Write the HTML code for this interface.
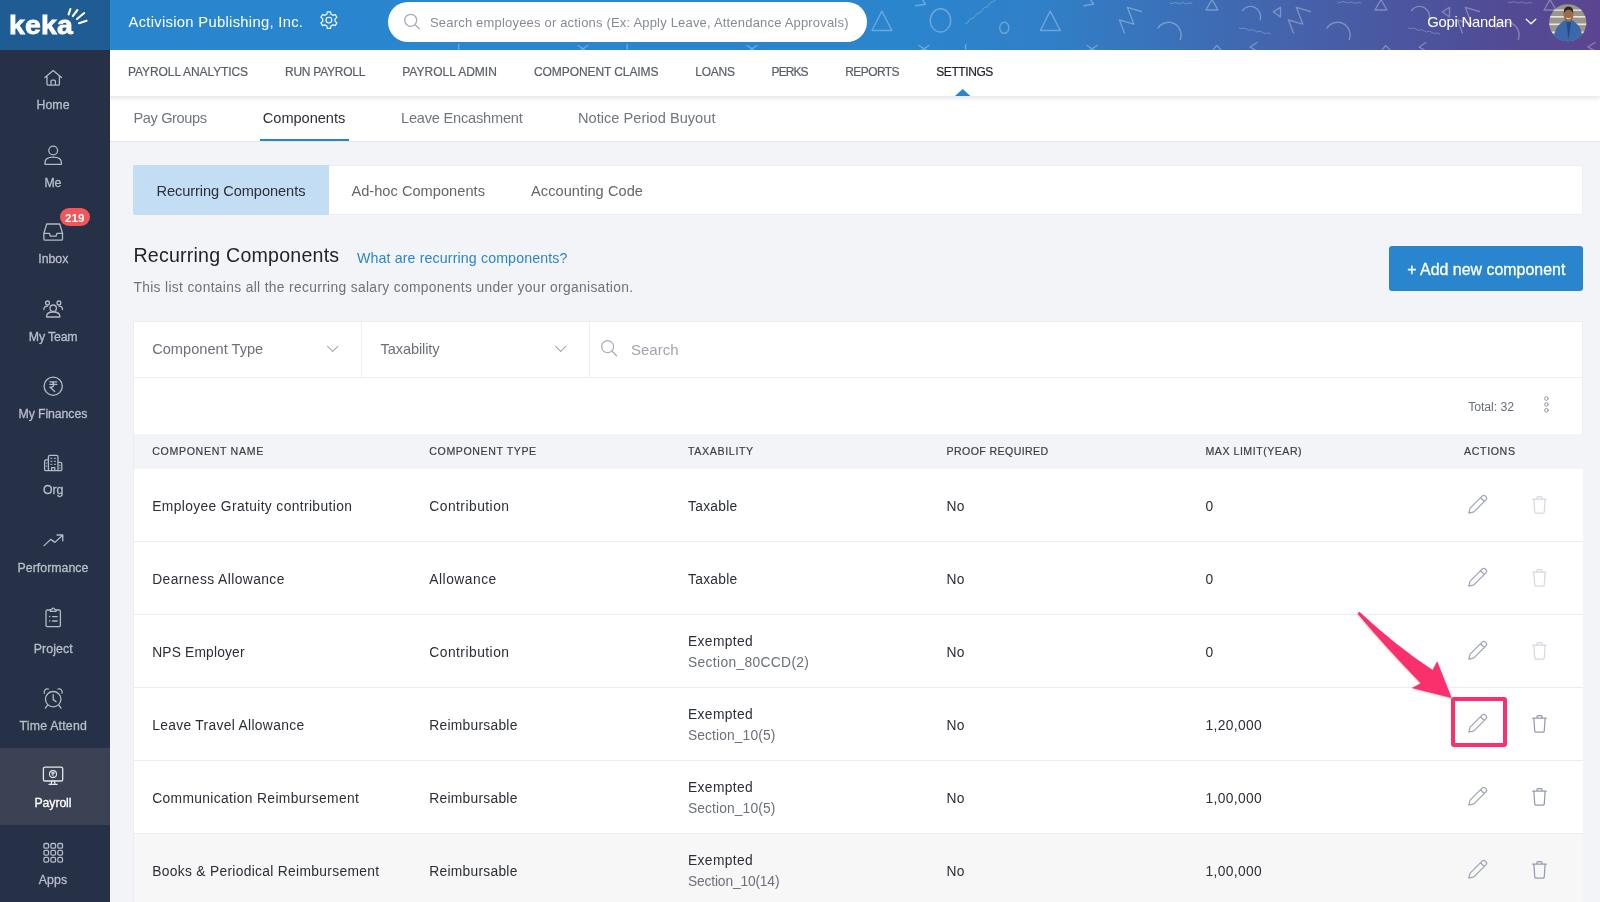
<!DOCTYPE html>
<html lang="en">
<head>
<meta charset="utf-8">
<title>Keka - Payroll Components</title>
<style>
*{box-sizing:border-box;margin:0;padding:0}
html,body{width:1600px;height:902px;overflow:hidden;background:#f3f4f8;font-family:"Liberation Sans",sans-serif;color:#2b2f36}
body{position:relative;will-change:transform}
.t{position:absolute;white-space:nowrap;line-height:1}
.a{position:absolute}
svg{position:absolute;overflow:visible}
#side{position:absolute;left:0;top:0;width:110px;height:902px;background:#263147}
#logo{position:absolute;left:0;top:0;width:110px;height:50px;background:#1f5c93}
#side .t{-webkit-text-stroke:.3px currentColor}
#side svg{fill:none;stroke:#b4bac6;stroke-width:1.3;stroke-linecap:round;stroke-linejoin:round}
#top{position:absolute;left:110px;top:0;width:1490px;height:50px;background:linear-gradient(90deg,#2986ce 0%,#2a85cd 53%,#3080c8 62.4%,#3b70b8 71.8%,#4562aa 79.9%,#4b56a0 86.6%,#514b95 93.3%,#5b4590 100%);overflow:hidden}
#nav{position:absolute;left:0;top:50px;width:1600px;height:46px;background:#fff;box-shadow:0 2px 5px rgba(30,40,70,.13)}
#sub{position:absolute;left:0;top:95px;width:1600px;height:47px;background:#fff;border-bottom:1px solid #e4e7ed}
.card{position:absolute;background:#fff;border:1px solid #ecedf1}
.row{position:absolute;left:134px;width:1449px;height:73px;border-bottom:1px solid #ececef;background:#fff}
</style>
</head>
<body>

<div id="sub"></div>
<div id="nav"></div>
<div class="t" style="left:133.4px;top:111.0px;font-size:14.6px;color:#70757e;letter-spacing:-0.366px;">Pay Groups</div>
<div class="t" style="left:262.8px;top:111.0px;font-size:14.6px;color:#2b2f36;letter-spacing:-0.031px;">Components</div>
<div class="t" style="left:401.0px;top:111.0px;font-size:14.6px;color:#70757e;letter-spacing:-0.213px;">Leave Encashment</div>
<div class="t" style="left:578.0px;top:111.0px;font-size:14.6px;color:#70757e;letter-spacing:0.018px;">Notice Period Buyout</div>
<div class="a" style="left:260px;top:139px;width:89px;height:2px;background:#2986ce"></div>
<div class="t" style="left:128.1px;top:65.9px;font-size:12px;color:#5a5f67;letter-spacing:-0.100px;-webkit-text-stroke:.2px currentColor;">PAYROLL ANALYTICS</div>
<div class="t" style="left:285.0px;top:65.9px;font-size:12px;color:#5a5f67;letter-spacing:-0.261px;-webkit-text-stroke:.2px currentColor;">RUN PAYROLL</div>
<div class="t" style="left:402.2px;top:65.9px;font-size:12px;color:#5a5f67;letter-spacing:0.019px;-webkit-text-stroke:.2px currentColor;">PAYROLL ADMIN</div>
<div class="t" style="left:534.0px;top:65.9px;font-size:12px;color:#5a5f67;letter-spacing:-0.086px;-webkit-text-stroke:.2px currentColor;">COMPONENT CLAIMS</div>
<div class="t" style="left:695.3px;top:65.9px;font-size:12px;color:#5a5f67;letter-spacing:-0.245px;-webkit-text-stroke:.2px currentColor;">LOANS</div>
<div class="t" style="left:771.6px;top:65.9px;font-size:12px;color:#5a5f67;letter-spacing:-0.921px;-webkit-text-stroke:.2px currentColor;">PERKS</div>
<div class="t" style="left:845.3px;top:65.9px;font-size:12px;color:#5a5f67;letter-spacing:-0.599px;-webkit-text-stroke:.2px currentColor;">REPORTS</div>
<div class="t" style="left:936.3px;top:65.9px;font-size:12px;color:#22262c;letter-spacing:-0.429px;-webkit-text-stroke:.2px currentColor;">SETTINGS</div>
<svg style="left:955px;top:89.2px" width="15.4" height="7"><path d="M0 7 L7.7 0 L15.4 7Z" fill="#2986ce"/></svg>
<div id="top">
<svg id="pat" style="left:-110px;top:0" width="1600" height="50" fill="none" stroke="#fff" stroke-linecap="round" stroke-linejoin="round">
<g stroke-opacity=".3" stroke-width="1.4"><path d="M1206 10 L1212 -0.5 L1218 10Z M1242.5 10.5 A10 10 0 0 1 1260 19.7 M1280.5 7.3 L1273.2 11.8 L1280.5 17Z M1310.4 11.5 L1296.3 7.3 L1302.8 24.1 L1288.4 20 L1293.4 32.8 M1327 28 A12.6 12.6 0 0 1 1349.3 39.4 M1213 50 L1216.7 45.5 L1221 50 M1257 42.5 L1250 47 L1257 51 M1375 10 L1381 -0.5 L1387 10Z M1411.5 10.5 A10 10 0 0 1 1429 19.7 M1449.5 7.3 L1442.2 11.8 L1449.5 17Z M1479.4 11.5 L1465.3 7.3 L1471.8 24.1 L1457.4 20 L1462.4 32.8 M1496 28 A12.6 12.6 0 0 1 1518.3 39.4 M1382 50 L1385.7 45.5 L1390 50 M1426 42.5 L1419 47 L1426 51 M1544 10 L1550 -0.5 L1556 10Z M1595 42.5 L1588 47 L1595 51 M1141.4 11.5 L1127.3 7.3 L1133.8 24.1 L1119.4 20 L1124.4 32.8 M1158 28 A12.6 12.6 0 0 1 1180.3 39.4"/><path d="M872 30.5 L881.8 11.1 L891.9 30.5Z M1040.4 30.5 L1050.2 11.1 L1060.3 30.5Z M915.5 5.8 L925.4 4.2 L922 -1 M1083.9 5.8 L1093.6 4 L1090 -1 M919 45.5 L929 52 M929 45.5 L919 52 M1087 45.5 L1097 52 M1097 45.5 L1087 52 M578 45.5 L588 52 M588 45.5 L578 52 M747 45.5 L757 52 M757 45.5 L747 52 M459 44.5 Q458 47 459 51 M627.5 44.5 Q626.5 47 627.5 51 M966 44.5 Q965 47 966 51"/><ellipse cx="940.5" cy="20.4" rx="10.2" ry="11.6"/><ellipse cx="1004.3" cy="27.8" rx="4.6" ry="5.5"/></g>
<g stroke-opacity=".28" stroke-width=".9"><path d="M965.2 24.0 Q967.7 23.6 968.6 21.2 Q969.5 18.8 972.0 18.4 Q974.6 18.1 975.5 15.7 Q976.4 13.3 978.9 12.9 Q981.4 12.5 982.3 10.1 Q983.2 7.7 985.7 7.3 Q988.3 7.0 989.2 4.6 Q990.0 2.2 992.6 1.8 Q995.1 1.4 996.0 -1.0 M1239.0 27.6 Q1240.7 29.3 1242.9 28.4 Q1245.2 27.5 1246.9 29.2 Q1248.6 30.9 1250.8 30.0 Q1253.0 29.1 1254.8 30.8 Q1256.5 32.5 1258.7 31.6 Q1260.9 30.7 1262.6 32.4 Q1264.3 34.1 1266.6 33.2 Q1268.8 32.3 1270.5 34.0 M1408.0 27.6 Q1409.7 29.3 1412.0 28.4 Q1414.2 27.5 1416.0 29.2 Q1417.7 30.9 1419.9 30.0 Q1422.2 29.1 1423.9 30.8 Q1425.6 32.5 1427.9 31.6 Q1430.1 30.7 1431.8 32.4 Q1433.6 34.1 1435.8 33.2 Q1438.1 32.3 1439.8 34.0 M1170.0 3.0 Q1171.8 4.3 1173.7 3.1 Q1175.5 1.8 1177.3 3.2 Q1179.1 4.5 1181.0 3.2 Q1182.9 2.0 1184.7 3.3 Q1186.5 4.7 1188.3 3.4 Q1190.2 2.2 1192.0 3.5 M1337.5 2.0 Q1339.4 3.4 1341.4 2.2 Q1343.4 1.0 1345.3 2.3 Q1347.2 3.7 1349.2 2.5 Q1351.3 1.3 1353.2 2.7 Q1355.1 4.0 1357.1 2.8 Q1359.1 1.6 1361.0 3.0 M1508.0 2.0 Q1509.9 3.4 1512.0 2.2 Q1514.0 1.0 1515.9 2.3 Q1517.8 3.7 1519.8 2.5 Q1521.9 1.3 1523.8 2.7 Q1525.7 4.0 1527.8 2.8 Q1529.8 1.6 1531.7 3.0"/></g>
</svg>
</div>
<div class="t" style="left:128.5px;top:14.5px;font-size:14.8px;color:#fff;letter-spacing:0.289px;">Activision Publishing, Inc.</div>
<div class="a" style="left:388px;top:2px;width:479px;height:40px;border-radius:20px;background:#fff"></div>
<div class="t" style="left:430.0px;top:15.9px;font-size:13px;color:#858b96;letter-spacing:0.187px;">Search employees or actions (Ex: Apply Leave, Attendance Approvals)</div>
<div class="t" style="left:1427.2px;top:14.8px;font-size:14.8px;color:#fff;letter-spacing:-0.212px;">Gopi Nandan</div>
<svg style="left:0;top:0" width="400" height="50" fill="none" stroke="#fff" stroke-width="1.15" stroke-linejoin="round"><path d="M330.95 14.14 L330.51 11.81 L327.29 11.81 L326.85 14.14 L324.77 15.35 L322.52 14.56 L320.91 17.35 L322.72 18.90 L322.72 21.30 L320.91 22.85 L322.52 25.64 L324.77 24.85 L326.85 26.06 L327.29 28.39 L330.51 28.39 L330.95 26.06 L333.03 24.85 L335.28 25.64 L336.89 22.85 L335.08 21.30 L335.08 18.90 L336.89 17.35 L335.28 14.56 L333.03 15.35Z"/><circle cx="328.9" cy="20.1" r="2.9"/></svg>
<svg style="left:400px;top:10px" width="24" height="24" fill="none" stroke="#a9aebb" stroke-width="1.3" stroke-linecap="round"><circle cx="10.7" cy="10.3" r="6"/><path d="M15 14.8 L19.3 18.8"/></svg>
<svg style="left:1520px;top:14px" width="20" height="14" fill="none" stroke="#fff" stroke-width="1.25" stroke-linecap="round" stroke-linejoin="round"><path d="M6.2 5.2 L11 9.8 L15.8 5.2"/></svg>
<svg style="left:1549px;top:3.5px" width="37.5" height="37.5" viewBox="0 0 37.5 37.5"><defs><clipPath id="av"><circle cx="18.75" cy="18.75" r="18.6"/></clipPath></defs><g clip-path="url(#av)"><rect width="38" height="38" fill="#9c968a"/><rect y="5.5" width="38" height="1.4" fill="#e4e1da"/><rect y="12" width="38" height="1.6" fill="#ebe8e2"/><rect y="19.5" width="38" height="1.6" fill="#ebe8e2"/><rect y="27.5" width="38" height="1.8" fill="#ebe8e2"/><path d="M4 38 Q5 24 12 19 L16 16 H23 L27 19 Q33 23 34 38Z" fill="#3b68a8"/><path d="M17.5 18 L19.5 36 L22 18Z" fill="#244a86"/><ellipse cx="19.5" cy="11.3" rx="4.9" ry="6.3" fill="#9c6a4b"/><path d="M14.6 9.5 Q14.5 2.5 19.5 2.6 Q24.5 2.5 24.4 9.5 Q22 5.5 19.5 5.8 Q17 5.5 14.6 9.5Z" fill="#2d2622"/><path d="M17.3 14 Q19.5 15.8 21.7 14" stroke="#f1e6dc" stroke-width="1" fill="none"/></g></svg>
<div id="side"><div id="logo"></div>
<div class="a" style="left:0;top:748px;width:110px;height:77px;background:#3a4254"></div>
<div class="t" style="left:36.6px;top:99.3px;font-size:12.3px;color:#b9bec9;letter-spacing:0.030px;">Home</div>
<div class="t" style="left:44.6px;top:176.5px;font-size:12.3px;color:#b9bec9;letter-spacing:-0.400px;">Me</div>
<div class="t" style="left:38.3px;top:253.4px;font-size:12.3px;color:#b9bec9;letter-spacing:-0.022px;">Inbox</div>
<div class="t" style="left:28.8px;top:330.7px;font-size:12.3px;color:#b9bec9;letter-spacing:-0.145px;">My Team</div>
<div class="t" style="left:18.5px;top:407.8px;font-size:12.3px;color:#b9bec9;letter-spacing:-0.092px;">My Finances</div>
<div class="t" style="left:42.9px;top:483.5px;font-size:12.3px;color:#b9bec9;">Org</div>
<div class="t" style="left:17.6px;top:561.9px;font-size:12.3px;color:#b9bec9;letter-spacing:0.029px;">Performance</div>
<div class="t" style="left:33.7px;top:642.7px;font-size:12.3px;color:#b9bec9;letter-spacing:0.120px;">Project</div>
<div class="t" style="left:19.5px;top:719.7px;font-size:12.3px;color:#b9bec9;letter-spacing:0.212px;">Time Attend</div>
<div class="t" style="left:34.5px;top:797.4px;font-size:12.3px;color:#fff;letter-spacing:-0.100px;">Payroll</div>
<div class="t" style="left:38.8px;top:874.3px;font-size:12.3px;color:#b9bec9;letter-spacing:0.121px;">Apps</div>
<div class="t" style="left:9.2px;top:12.9px;font-size:25.4px;font-weight:700;color:#fff;letter-spacing:.2px;transform:scaleX(1.12);transform-origin:0 0;-webkit-text-stroke:.8px #fff">keka</div>
<svg style="left:0;top:0;stroke:#fff;stroke-width:2.1" width="110" height="50"><path d="M70.4 9 L68.6 14.4 M77.4 10 L72.8 16.2 M84.2 13 L77 19 M86.6 20.8 L79 23.2"/></svg>
<svg style="left:0;top:0" width="110" height="902">
<path d="M44.9 77.6 L53.2 70.6 L61.5 77.6 M47 76.2 V84 a1.2 1.2 0 0 0 1.2 1.2 H58.2 a1.2 1.2 0 0 0 1.2 -1.2 V76.2 M51 85 V81.2 a1 1 0 0 1 1 -1 h2.4 a1 1 0 0 1 1 1 V85"/>
<circle cx="53.2" cy="150.5" r="4.4"/><path d="M45 164.3 v-1.6 q0 -5.6 8.2 -5.6 q8.2 0 8.2 5.6 v1.6 z"/>
<path d="M43.9 233.3 L46.7 224 H59.7 L62.5 233.3 V239 a1.2 1.2 0 0 1 -1.2 1.2 H45.1 a1.2 1.2 0 0 1 -1.2 -1.2 Z M43.9 233.3 H49.4 L50.4 236.2 H56 L57 233.3 H62.5"/>
<circle cx="53.2" cy="308.2" r="3.2"/><path d="M46.6 317 v-.8 q0 -4.2 6.6 -4.2 q6.6 0 6.6 4.2 v.8 z"/><circle cx="47.5" cy="302.9" r="1.9"/><circle cx="58.9" cy="302.9" r="1.9"/><path d="M43.9 309.6 q0 -3.4 3.6 -3.4 M62.5 309.6 q0 -3.4 -3.6 -3.4"/>
<circle cx="53.2" cy="386.2" r="9.1"/><path d="M49.9 381.8 H56.8 M49.9 384.4 H56.8 M51.6 381.8 a2.7 2.7 0 0 1 0 5.3 H49.9 L54.7 391.5"/>
<path d="M48.4 470.6 V457 a1.6 1.6 0 0 1 1.6 -1.6 H56.4 a1.6 1.6 0 0 1 1.6 1.6 V470.6 M48.4 459.8 H46 a1.4 1.4 0 0 0 -1.4 1.4 V469.4 a1.2 1.2 0 0 0 1.2 1.2 H60.6 a1.2 1.2 0 0 0 1.2 -1.2 V463.8 a1.4 1.4 0 0 0 -1.4 -1.4 H58 M51.6 470.6 V467.6 h3.2 V470.6"/><path stroke-width="1.1" d="M50.8 458.2 h1.2 M54.4 458.2 h1.2 M50.8 461.2 h1.2 M54.4 461.2 h1.2 M50.8 464.2 h1.2 M54.4 464.2 h1.2 M46.2 463 h.6 M46.2 466 h.6 M59.6 465.2 h.6 M59.6 468 h.6"/>
<path d="M44.1 545.6 L50.7 539.4 L54.9 542.4 L62.6 535.2 M57 535 H62.8 V540.8"/>
<path d="M50.4 610 H47.4 a1.4 1.4 0 0 0 -1.4 1.4 V625.2 a1.4 1.4 0 0 0 1.4 1.4 H59 a1.4 1.4 0 0 0 1.4 -1.4 V611.4 a1.4 1.4 0 0 0 -1.4 -1.4 H56 M50.4 611.4 V609.6 h1.4 a1.4 1.4 0 0 1 2.8 0 h1.4 V611.4 Z M52.6 616.6 H57.2 M52.6 621 H57.2"/><path stroke-width="1.5" d="M49.6 616.6 h.1 M49.6 621 h.1"/>
<circle cx="53.2" cy="699.2" r="7.7"/><path d="M53.2 694.6 V699.6 L56 701.6 M44.4 693.2 a3.2 3.2 0 0 1 4 -4.2 M62 693.2 a3.2 3.2 0 0 0 -4 -4.2 M47.6 705.2 L45.4 708 M58.8 705.2 L61 708"/>
<g stroke="#e6e8ed"><rect x="43.4" y="767.2" width="19.3" height="13.8" rx="1.6"/><path d="M51.8 781 L51.2 784.2 M54.4 781 L55 784.2 M49 784.3 H57.2"/><circle cx="53" cy="774.1" r="3.5" stroke-width="1.1"/><path stroke-width=".8" d="M51.8 772.4 H54.3 M51.8 773.5 H54.3 M52.4 772.4 a1.1 1.1 0 0 1 0 2.2 H51.8 L53.8 776.2"/></g>
<rect x="43.90" y="843.50" width="4.7" height="4.7" rx="1.3"/>
<rect x="50.85" y="843.50" width="4.7" height="4.7" rx="1.3"/>
<rect x="57.80" y="843.50" width="4.7" height="4.7" rx="1.3"/>
<rect x="43.90" y="850.45" width="4.7" height="4.7" rx="1.3"/>
<rect x="50.85" y="850.45" width="4.7" height="4.7" rx="1.3"/>
<rect x="57.80" y="850.45" width="4.7" height="4.7" rx="1.3"/>
<rect x="43.90" y="857.40" width="4.7" height="4.7" rx="1.3"/>
<rect x="50.85" y="857.40" width="4.7" height="4.7" rx="1.3"/>
<rect x="57.80" y="857.40" width="4.7" height="4.7" rx="1.3"/>
</svg>
<div class="a" style="left:60px;top:208.2px;width:30.2px;height:17.6px;border-radius:9px;background:#f2565b"></div>
<div class="t" style="left:65.0px;top:211.5px;font-size:11.6px;color:#fff;letter-spacing:0.023px;font-weight:700;-webkit-text-stroke:0;">219</div>
</div>
<div class="card" style="left:133px;top:165px;width:1450px;height:50px;border-color:#eceef3;border-radius:2px"></div>
<div class="a" style="left:133px;top:165px;width:196px;height:50px;background:#c3ddf4;border-radius:2px 0 0 2px"></div>
<div class="t" style="left:156.4px;top:183.7px;font-size:14.6px;color:#2b2f36;letter-spacing:-0.054px;">Recurring Components</div>
<div class="t" style="left:351.4px;top:183.7px;font-size:14.6px;color:#63666c;letter-spacing:0.031px;">Ad-hoc Components</div>
<div class="t" style="left:531.0px;top:183.7px;font-size:14.6px;color:#63666c;letter-spacing:0.057px;">Accounting Code</div>
<div class="t" style="left:133.4px;top:246.4px;font-size:19.6px;color:#222427;letter-spacing:0.224px;">Recurring Components</div>
<div class="t" style="left:357.0px;top:250.7px;font-size:14.2px;color:#2986ce;letter-spacing:0.131px;">What are recurring components?</div>
<div class="t" style="left:133.4px;top:280.9px;font-size:13.8px;color:#6f7277;letter-spacing:0.340px;">This list contains all the recurring salary components under your organisation.</div>
<div class="a" style="left:1389px;top:246px;width:194px;height:45px;border-radius:3px;background:#2986ce"></div>
<div class="t" style="left:1407.2px;top:261.6px;font-size:15.9px;color:#fff;letter-spacing:0.023px;-webkit-text-stroke:.3px #fff;">+ Add new component</div>
<div class="card" style="left:133px;top:321px;width:1450px;height:600px"></div>
<div class="a" style="left:134px;top:377px;width:1448px;height:1px;background:#eceef2"></div>
<div class="a" style="left:361px;top:322px;width:1px;height:55px;background:#eceef2"></div>
<div class="a" style="left:589px;top:322px;width:1px;height:55px;background:#eceef2"></div>
<div class="t" style="left:152.2px;top:342.1px;font-size:14.6px;color:#6b7079;letter-spacing:0.013px;">Component Type</div>
<div class="t" style="left:380.5px;top:342.1px;font-size:14.6px;color:#6b7079;letter-spacing:-0.105px;">Taxability</div>
<div class="t" style="left:630.9px;top:342.3px;font-size:15px;color:#a0a5ae;letter-spacing:0.055px;">Search</div>
<svg style="left:0;top:0" width="1600" height="420" fill="none" stroke="#a0a6b2" stroke-width="1.1" stroke-linecap="round" stroke-linejoin="round"><path d="M327.6 346.4 L332.7 351.3 L337.8 346.4 M555.6 346.4 L560.7 351.3 L565.8 346.4"/><g stroke="#a9aebb" stroke-width="1.3"><circle cx="607.6" cy="346.6" r="6"/><path d="M612 351.3 L616.6 355.8"/></g><g stroke="#8f95a2" stroke-width="1"><circle cx="1546.4" cy="398.5" r="1.8"/><circle cx="1546.4" cy="404.4" r="1.8"/><circle cx="1546.4" cy="410.3" r="1.8"/></g></svg>
<div class="t" style="left:1468.2px;top:400.7px;font-size:12.3px;color:#6b7079;letter-spacing:-0.087px;">Total: 32</div>
<div class="a" style="left:134px;top:434px;width:1449px;height:35px;background:#f3f4f8"></div>
<div class="t" style="left:152.2px;top:446.4px;font-size:10.6px;color:#3a3f47;letter-spacing:0.679px;-webkit-text-stroke:.2px currentColor;">COMPONENT NAME</div>
<div class="t" style="left:429.3px;top:446.4px;font-size:10.6px;color:#3a3f47;letter-spacing:0.596px;-webkit-text-stroke:.2px currentColor;">COMPONENT TYPE</div>
<div class="t" style="left:688.0px;top:446.4px;font-size:10.6px;color:#3a3f47;letter-spacing:0.656px;-webkit-text-stroke:.2px currentColor;">TAXABILITY</div>
<div class="t" style="left:946.5px;top:446.4px;font-size:10.6px;color:#3a3f47;letter-spacing:0.401px;-webkit-text-stroke:.2px currentColor;">PROOF REQUIRED</div>
<div class="t" style="left:1205.5px;top:446.4px;font-size:10.6px;color:#3a3f47;letter-spacing:0.519px;-webkit-text-stroke:.2px currentColor;">MAX LIMIT(YEAR)</div>
<div class="t" style="left:1464.0px;top:446.4px;font-size:10.6px;color:#3a3f47;letter-spacing:0.647px;-webkit-text-stroke:.2px currentColor;">ACTIONS</div>
<div class="row" style="top:469px;background:#fff"></div>
<div class="t" style="left:152.2px;top:499.5px;font-size:13.8px;color:#2b2f36;letter-spacing:0.380px;">Employee Gratuity contribution</div>
<div class="t" style="left:429.3px;top:499.5px;font-size:13.8px;color:#2b2f36;letter-spacing:0.481px;">Contribution</div>
<div class="t" style="left:688.0px;top:499.5px;font-size:13.8px;color:#2b2f36;letter-spacing:0.289px;">Taxable</div>
<div class="t" style="left:946.5px;top:499.5px;font-size:13.8px;color:#2b2f36;letter-spacing:0.400px;">No</div>
<div class="t" style="left:1205.5px;top:499.5px;font-size:13.8px;color:#2b2f36;">0</div>
<svg class="pen" style="left:1468px;top:494px" width="20" height="20" viewBox="0 0 20 20" fill="none" stroke="#a0a6b6" stroke-width="1.25" stroke-linejoin="round" stroke-linecap="round"><path d="M0.8 19.2 L2.1 14.1 L14.1 2.1 a2.3 2.3 0 0 1 3.25 0 l0.55 0.55 a2.3 2.3 0 0 1 0 3.25 L5.9 17.9 Z M12.5 3.7 L16.3 7.5"/></svg>
<svg class="bin" style="left:1532px;top:496px" width="15" height="18" viewBox="0 0 15 18" fill="none" stroke="#d6d9e1" stroke-width="1.25" stroke-linejoin="round" stroke-linecap="round"><path d="M0.7 3.2 H14.3 M5 3 V1.6 a.9 .9 0 0 1 .9 -.9 H9.1 a.9 .9 0 0 1 .9 .9 V3 M1.9 3.4 L2.7 15.6 a1.7 1.7 0 0 0 1.7 1.6 H10.6 a1.7 1.7 0 0 0 1.7 -1.6 L13.1 3.4"/></svg>
<div class="row" style="top:542px;background:#fff"></div>
<div class="t" style="left:152.2px;top:572.5px;font-size:13.8px;color:#2b2f36;letter-spacing:0.421px;">Dearness Allowance</div>
<div class="t" style="left:429.3px;top:572.5px;font-size:13.8px;color:#2b2f36;letter-spacing:0.512px;">Allowance</div>
<div class="t" style="left:688.0px;top:572.5px;font-size:13.8px;color:#2b2f36;letter-spacing:0.289px;">Taxable</div>
<div class="t" style="left:946.5px;top:572.5px;font-size:13.8px;color:#2b2f36;letter-spacing:0.400px;">No</div>
<div class="t" style="left:1205.5px;top:572.5px;font-size:13.8px;color:#2b2f36;">0</div>
<svg class="pen" style="left:1468px;top:567px" width="20" height="20" viewBox="0 0 20 20" fill="none" stroke="#a0a6b6" stroke-width="1.25" stroke-linejoin="round" stroke-linecap="round"><path d="M0.8 19.2 L2.1 14.1 L14.1 2.1 a2.3 2.3 0 0 1 3.25 0 l0.55 0.55 a2.3 2.3 0 0 1 0 3.25 L5.9 17.9 Z M12.5 3.7 L16.3 7.5"/></svg>
<svg class="bin" style="left:1532px;top:569px" width="15" height="18" viewBox="0 0 15 18" fill="none" stroke="#d6d9e1" stroke-width="1.25" stroke-linejoin="round" stroke-linecap="round"><path d="M0.7 3.2 H14.3 M5 3 V1.6 a.9 .9 0 0 1 .9 -.9 H9.1 a.9 .9 0 0 1 .9 .9 V3 M1.9 3.4 L2.7 15.6 a1.7 1.7 0 0 0 1.7 1.6 H10.6 a1.7 1.7 0 0 0 1.7 -1.6 L13.1 3.4"/></svg>
<div class="row" style="top:615px;background:#fff"></div>
<div class="t" style="left:152.2px;top:645.5px;font-size:13.8px;color:#2b2f36;letter-spacing:0.173px;">NPS Employer</div>
<div class="t" style="left:429.3px;top:645.5px;font-size:13.8px;color:#2b2f36;letter-spacing:0.481px;">Contribution</div>
<div class="t" style="left:688.0px;top:635.2px;font-size:13.8px;color:#2b2f36;letter-spacing:0.381px;">Exempted</div>
<div class="t" style="left:688.0px;top:655.8px;font-size:13.8px;color:#6b7079;letter-spacing:0.345px;">Section_80CCD(2)</div>
<div class="t" style="left:946.5px;top:645.5px;font-size:13.8px;color:#2b2f36;letter-spacing:0.400px;">No</div>
<div class="t" style="left:1205.5px;top:645.5px;font-size:13.8px;color:#2b2f36;">0</div>
<svg class="pen" style="left:1468px;top:640px" width="20" height="20" viewBox="0 0 20 20" fill="none" stroke="#a0a6b6" stroke-width="1.25" stroke-linejoin="round" stroke-linecap="round"><path d="M0.8 19.2 L2.1 14.1 L14.1 2.1 a2.3 2.3 0 0 1 3.25 0 l0.55 0.55 a2.3 2.3 0 0 1 0 3.25 L5.9 17.9 Z M12.5 3.7 L16.3 7.5"/></svg>
<svg class="bin" style="left:1532px;top:642px" width="15" height="18" viewBox="0 0 15 18" fill="none" stroke="#d6d9e1" stroke-width="1.25" stroke-linejoin="round" stroke-linecap="round"><path d="M0.7 3.2 H14.3 M5 3 V1.6 a.9 .9 0 0 1 .9 -.9 H9.1 a.9 .9 0 0 1 .9 .9 V3 M1.9 3.4 L2.7 15.6 a1.7 1.7 0 0 0 1.7 1.6 H10.6 a1.7 1.7 0 0 0 1.7 -1.6 L13.1 3.4"/></svg>
<div class="row" style="top:688px;background:#fff"></div>
<div class="t" style="left:152.2px;top:718.5px;font-size:13.8px;color:#2b2f36;letter-spacing:0.329px;">Leave Travel Allowance</div>
<div class="t" style="left:429.3px;top:718.5px;font-size:13.8px;color:#2b2f36;letter-spacing:0.269px;">Reimbursable</div>
<div class="t" style="left:688.0px;top:708.2px;font-size:13.8px;color:#2b2f36;letter-spacing:0.381px;">Exempted</div>
<div class="t" style="left:688.0px;top:728.8px;font-size:13.8px;color:#6b7079;letter-spacing:0.115px;">Section_10(5)</div>
<div class="t" style="left:946.5px;top:718.5px;font-size:13.8px;color:#2b2f36;letter-spacing:0.400px;">No</div>
<div class="t" style="left:1205.5px;top:718.5px;font-size:13.8px;color:#2b2f36;letter-spacing:0.369px;">1,20,000</div>
<svg class="pen" style="left:1468px;top:713px" width="20" height="20" viewBox="0 0 20 20" fill="none" stroke="#a0a6b6" stroke-width="1.25" stroke-linejoin="round" stroke-linecap="round"><path d="M0.8 19.2 L2.1 14.1 L14.1 2.1 a2.3 2.3 0 0 1 3.25 0 l0.55 0.55 a2.3 2.3 0 0 1 0 3.25 L5.9 17.9 Z M12.5 3.7 L16.3 7.5"/></svg>
<svg class="bin" style="left:1532px;top:715px" width="15" height="18" viewBox="0 0 15 18" fill="none" stroke="#969cb0" stroke-width="1.25" stroke-linejoin="round" stroke-linecap="round"><path d="M0.7 3.2 H14.3 M5 3 V1.6 a.9 .9 0 0 1 .9 -.9 H9.1 a.9 .9 0 0 1 .9 .9 V3 M1.9 3.4 L2.7 15.6 a1.7 1.7 0 0 0 1.7 1.6 H10.6 a1.7 1.7 0 0 0 1.7 -1.6 L13.1 3.4"/></svg>
<div class="row" style="top:761px;background:#fff"></div>
<div class="t" style="left:152.2px;top:791.5px;font-size:13.8px;color:#2b2f36;letter-spacing:0.369px;">Communication Reimbursement</div>
<div class="t" style="left:429.3px;top:791.5px;font-size:13.8px;color:#2b2f36;letter-spacing:0.269px;">Reimbursable</div>
<div class="t" style="left:688.0px;top:781.2px;font-size:13.8px;color:#2b2f36;letter-spacing:0.381px;">Exempted</div>
<div class="t" style="left:688.0px;top:801.8px;font-size:13.8px;color:#6b7079;letter-spacing:0.115px;">Section_10(5)</div>
<div class="t" style="left:946.5px;top:791.5px;font-size:13.8px;color:#2b2f36;letter-spacing:0.400px;">No</div>
<div class="t" style="left:1205.5px;top:791.5px;font-size:13.8px;color:#2b2f36;letter-spacing:0.369px;">1,00,000</div>
<svg class="pen" style="left:1468px;top:786px" width="20" height="20" viewBox="0 0 20 20" fill="none" stroke="#a0a6b6" stroke-width="1.25" stroke-linejoin="round" stroke-linecap="round"><path d="M0.8 19.2 L2.1 14.1 L14.1 2.1 a2.3 2.3 0 0 1 3.25 0 l0.55 0.55 a2.3 2.3 0 0 1 0 3.25 L5.9 17.9 Z M12.5 3.7 L16.3 7.5"/></svg>
<svg class="bin" style="left:1532px;top:788px" width="15" height="18" viewBox="0 0 15 18" fill="none" stroke="#969cb0" stroke-width="1.25" stroke-linejoin="round" stroke-linecap="round"><path d="M0.7 3.2 H14.3 M5 3 V1.6 a.9 .9 0 0 1 .9 -.9 H9.1 a.9 .9 0 0 1 .9 .9 V3 M1.9 3.4 L2.7 15.6 a1.7 1.7 0 0 0 1.7 1.6 H10.6 a1.7 1.7 0 0 0 1.7 -1.6 L13.1 3.4"/></svg>
<div class="row" style="top:834px;background:#f7f7f8"></div>
<div class="t" style="left:152.2px;top:864.5px;font-size:13.8px;color:#2b2f36;letter-spacing:0.317px;">Books &amp; Periodical Reimbursement</div>
<div class="t" style="left:429.3px;top:864.5px;font-size:13.8px;color:#2b2f36;letter-spacing:0.269px;">Reimbursable</div>
<div class="t" style="left:688.0px;top:854.2px;font-size:13.8px;color:#2b2f36;letter-spacing:0.381px;">Exempted</div>
<div class="t" style="left:688.0px;top:874.8px;font-size:13.8px;color:#6b7079;letter-spacing:-0.161px;">Section_10(14)</div>
<div class="t" style="left:946.5px;top:864.5px;font-size:13.8px;color:#2b2f36;letter-spacing:0.400px;">No</div>
<div class="t" style="left:1205.5px;top:864.5px;font-size:13.8px;color:#2b2f36;letter-spacing:0.369px;">1,00,000</div>
<svg class="pen" style="left:1468px;top:859px" width="20" height="20" viewBox="0 0 20 20" fill="none" stroke="#a0a6b6" stroke-width="1.25" stroke-linejoin="round" stroke-linecap="round"><path d="M0.8 19.2 L2.1 14.1 L14.1 2.1 a2.3 2.3 0 0 1 3.25 0 l0.55 0.55 a2.3 2.3 0 0 1 0 3.25 L5.9 17.9 Z M12.5 3.7 L16.3 7.5"/></svg>
<svg class="bin" style="left:1532px;top:861px" width="15" height="18" viewBox="0 0 15 18" fill="none" stroke="#969cb0" stroke-width="1.25" stroke-linejoin="round" stroke-linecap="round"><path d="M0.7 3.2 H14.3 M5 3 V1.6 a.9 .9 0 0 1 .9 -.9 H9.1 a.9 .9 0 0 1 .9 .9 V3 M1.9 3.4 L2.7 15.6 a1.7 1.7 0 0 0 1.7 1.6 H10.6 a1.7 1.7 0 0 0 1.7 -1.6 L13.1 3.4"/></svg>
<div class="a" style="left:1451px;top:697px;width:56px;height:50px;border:4px solid #f9306c;border-radius:3px"></div>
<svg style="left:0;top:0" width="1600" height="902"><path d="M1360.2 612.4 Q1395 645 1432.6 670 L1437.2 661.2 L1451.7 698.1 L1411.8 688.1 L1420.7 683.3 Q1388 650 1358.2 614.6 A1.5 1.5 0 0 1 1360.2 612.4Z" fill="#f9306c" style="filter:drop-shadow(0 1px 1px rgba(0,0,0,.25))"/></svg>
</body>
</html>
